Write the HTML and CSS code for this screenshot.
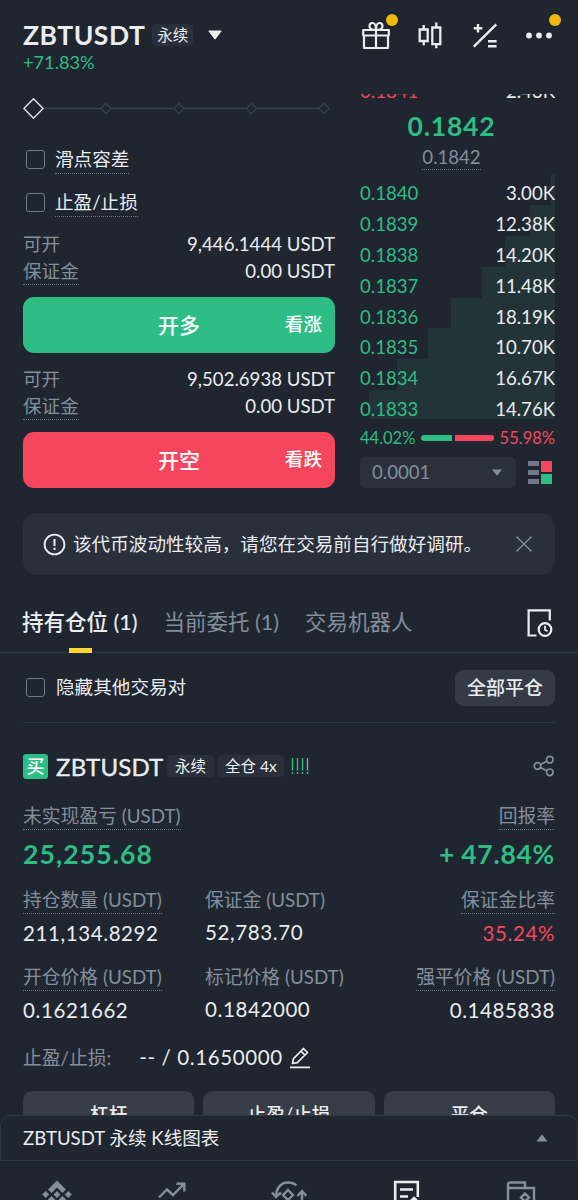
FILE: index.html
```html
<!DOCTYPE html>
<html lang="zh-CN">
<head>
    <meta charset="UTF-8">
    <meta name="viewport" content="width=device-width, initial-scale=1.0">
    <title>ZBTUSDT 永续</title>
    <link rel="stylesheet" href="styles.css">
</head>
<body>
    <header class="header">
        <div class="pair">
            <div class="pair-row">
                <h1 class="pair-name">ZBTUSDT</h1>
                <span class="tag">永续</span>
                <svg class="caret" width="14" height="10" viewBox="0 0 14 10"><path d="M1.2 0.5h11.6a.7.7 0 0 1 .5 1.1L7.7 8.9a.9.9 0 0 1-1.4 0L.7 1.6A.7.7 0 0 1 1.2.5z" fill="#eaecef"/></svg>
            </div>
            <div class="change">+71.83%</div>
        </div>
        <div class="header-icons">
            <span class="icon">
                <svg width="30" height="30" viewBox="0 0 30 30" fill="none" stroke="#eaecef" stroke-width="2.2" stroke-linejoin="round">
                    <path d="M2.2 10h25.6v5.5H2.2zM3 15.5h24v12.500H3zM15 10v18"/>
                    <path d="M15 10c-4 0-6.500-1-6.500-3.800C8.500 4 10 3 11.500 3c2.300 0 3.500 2 3.500 7zM15 10c4 0 6.500-1 6.500-3.800C21.500 4 20 3 18.500 3c-2.300 0-3.500 2-3.500 7z"/>
                </svg>
                <i class="dot"></i>
            </span>
            <span class="icon">
                <svg width="30" height="30" viewBox="0 0 30 30" fill="none" stroke="#eaecef" stroke-width="2.3">
                    <path d="M4.700 9.500h8v11.500h-8zM8.700 5v4.500M8.700 21v4.200M17.300 7.500h8v16.700h-8zM21.300 2.500v5M21.300 24.200v4"/>
                </svg>
            </span>
            <span class="icon">
                <svg width="30" height="30" viewBox="0 0 30 30" fill="none" stroke="#eaecef" stroke-width="2.4">
                    <path d="M26.300 4.300 3.800 26.700M8 4v8.600M3.700 8.300h8.600M18 21.300h8.600M18 26.300h8.600"/>
                </svg>
            </span>
            <span class="icon">
                <svg width="30" height="30" viewBox="0 0 30 30" fill="#eaecef"><circle cx="5" cy="15.500" r="2.900"/><circle cx="15" cy="15.500" r="2.900"/><circle cx="25" cy="15.500" r="2.900"/></svg>
                <i class="dot"></i>
            </span>
        </div>
    </header>

    <main class="content">
        <section class="trade">
            <div class="order-form">
                <div class="slider">
                    <svg width="312" height="28" viewBox="0 0 312 28" fill="none" stroke="#37404d" stroke-width="1.400">
                        <path d="M20 14.500h58M88 14.500h63M161 14.500h62.500M233.500 14.500h62.500"/>
                        <path d="M83 9.500l5 5-5 5-5-5zM156 9.500l5 5-5 5-5-5zM228.500 9.500l5 5-5 5-5-5zM301 9.500l5 5-5 5-5-5z"/>
                        <path d="M10.500 4.800l9.600 9.700-9.600 9.700-9.600-9.700z" stroke="#dfe3e8" stroke-linejoin="round"/>
                    </svg>
                </div>
                <div class="check-row"><i class="checkbox"></i><span class="dotted">滑点容差</span></div>
                <div class="check-row"><i class="checkbox"></i><span class="dotted">止盈/止损</span></div>
                <div class="info">
                    <div class="info-row"><span class="muted">可开</span><span>9,446.1444 USDT</span></div>
                    <div class="info-row"><span class="muted dotted">保证金</span><span>0.00 USDT</span></div>
                </div>
                <div class="order-button buy"><span class="order-main">开多</span><span class="order-side">看涨</span></div>
                <div class="info">
                    <div class="info-row"><span class="muted">可开</span><span>9,502.6938 USDT</span></div>
                    <div class="info-row"><span class="muted dotted">保证金</span><span>0.00 USDT</span></div>
                </div>
                <div class="order-button sell"><span class="order-main">开空</span><span class="order-side">看跌</span></div>
            </div>

            <div class="book">
                <div class="book-ask"><span class="red">0.1841</span><span>2.43K</span></div>
                <div class="last-price">0.1842</div>
                <div class="mark-price"><span class="dotted">0.1842</span></div>
                <div class="bids">
                    <div class="bid"><i class="depth" style="width: 4px"></i><span class="green">0.1840</span><span>3.00K</span></div>
                    <div class="bid"><i class="depth" style="width: 25px"></i><span class="green">0.1839</span><span>12.38K</span></div>
                    <div class="bid"><i class="depth" style="width: 50px"></i><span class="green">0.1838</span><span>14.20K</span></div>
                    <div class="bid"><i class="depth" style="width: 73px"></i><span class="green">0.1837</span><span>11.48K</span></div>
                    <div class="bid"><i class="depth" style="width: 104px"></i><span class="green">0.1836</span><span>18.19K</span></div>
                    <div class="bid"><i class="depth" style="width: 127px"></i><span class="green">0.1835</span><span>10.70K</span></div>
                    <div class="bid"><i class="depth" style="width: 158px"></i><span class="green">0.1834</span><span>16.67K</span></div>
                    <div class="bid"><i class="depth" style="width: 186px"></i><span class="green">0.1833</span><span>14.76K</span></div>
                </div>
                <div class="ratio">
                    <span class="green">44.02%</span>
                    <span class="ratio-bar"><i class="ratio-buy" style="flex-grow: 44.02"></i><i class="ratio-sell" style="flex-grow: 55.98"></i></span>
                    <span class="red">55.98%</span>
                </div>
                <div class="book-tools">
                    <div class="select">
                        <span>0.0001</span>
                        <svg width="10" height="7" viewBox="0 0 10 7"><path d="M0 .5h10L5 6.800z" fill="#848e9c"/></svg>
                    </div>
                    <svg class="book-mode" width="25" height="25" viewBox="0 0 25 25">
                        <path d="M0 1h11v5H0zM0 10h11v5H0zM0 19h11v5H0z" fill="#707889"/>
                        <path d="M13 1h11v11H13z" fill="#f6465d"/>
                        <path d="M13 14h11v10H13z" fill="#2ebd85"/>
                    </svg>
                </div>
            </div>
        </section>

        <section class="notice">
            <svg width="23" height="23" viewBox="0 0 23 23" fill="none" stroke="#eaecef" stroke-width="1.800"><circle cx="11.500" cy="11.500" r="9.900"/><path d="M11.500 6v7M11.500 14.800v2.200" stroke-width="2"/></svg>
            <span class="notice-text">该代币波动性较高，请您在交易前自行做好调研。</span>
            <svg width="18" height="18" viewBox="0 0 18 18" fill="none" stroke="#848e9c" stroke-width="1.400"><path d="M1.500 1.500l15 15M16.500 1.500l-15 15"/></svg>
        </section>

        <nav class="tabs">
            <span class="tab active">持有仓位 (1)</span>
            <span class="tab">当前委托 (1)</span>
            <span class="tab">交易机器人</span>
            <svg class="history" width="27" height="30" viewBox="0 0 27 30" fill="none" stroke="#eaecef" stroke-width="2.200">
                <path d="M10.500 27.500H2.600V2.400h21.200v10"/>
                <circle cx="19" cy="21.500" r="6.300"/>
                <path d="M19 17.800v4l2.600 1.500" stroke-width="1.800"/>
            </svg>
        </nav>

        <section class="filter">
            <i class="checkbox"></i>
            <span class="filter-text">隐藏其他交易对</span>
            <span class="close-all">全部平仓</span>
        </section>

        <section class="position">
            <div class="position-head">
                <span class="side">买</span>
                <span class="position-name">ZBTUSDT</span>
                <span class="tag small">永续</span>
                <span class="tag small">全仓 4x</span>
                <svg class="risk" width="18" height="18" viewBox="0 0 18 18" fill="none" stroke="#2ebd85" stroke-width="1.400">
                    <path d="M1.500 1v12.500M6.500 1v12.500M11.500 1v12.500M1.500 15v2M6.500 15v2M11.500 15v2"/>
                    <path d="M16.500 1v12.500M16.500 15v2" stroke="#76ad9d"/>
                </svg>
                <svg class="share" width="22" height="22" viewBox="0 0 22 22" fill="none" stroke="#848e9c" stroke-width="1.700">
                    <circle cx="4.500" cy="11" r="3.300"/><circle cx="16.800" cy="4.700" r="3.300"/><circle cx="16.800" cy="17.300" r="3.300"/>
                    <path d="M7.500 9.500l6.300-3.200M7.500 12.500l6.300 3.200"/>
                </svg>
            </div>
            <div class="pnl">
                <div class="cell"><span class="label dotted">未实现盈亏 (USDT)</span><span class="pnl-value">25,255.68</span></div>
                <div class="cell right"><span class="label dotted">回报率</span><span class="pnl-value">+ 47.84%</span></div>
            </div>
            <div class="stats">
                <div class="cell"><span class="label dotted">持仓数量 (USDT)</span><span class="value">211,134.8292</span></div>
                <div class="cell"><span class="label">保证金 (USDT)</span><span class="value">52,783.70</span></div>
                <div class="cell right"><span class="label dotted">保证金比率</span><span class="value red">35.24%</span></div>
                <div class="cell"><span class="label dotted">开仓价格 (USDT)</span><span class="value">0.1621662</span></div>
                <div class="cell"><span class="label">标记价格 (USDT)</span><span class="value">0.1842000</span></div>
                <div class="cell right"><span class="label dotted">强平价格 (USDT)</span><span class="value">0.1485838</span></div>
            </div>
            <div class="tpsl">
                <span class="label">止盈/止损:</span>
                <span class="tpsl-value">-- / 0.1650000</span>
                <svg width="22" height="23" viewBox="0 0 22 23" fill="none" stroke="#eaecef" stroke-width="1.700" stroke-linejoin="round">
                    <path d="M3.500 17.500l1-4.800L14.500 2.500l4 4L8.300 16.600zM12 5.200l3.800 3.800M1 21.300h20"/>
                </svg>
            </div>
            <div class="actions">
                <span class="action">杠杆</span>
                <span class="action">止盈/止损</span>
                <span class="action">平仓</span>
            </div>
        </section>
    </main>

    <div class="chart-bar">
        <span>ZBTUSDT 永续 K线图表</span>
        <svg width="12" height="8" viewBox="0 0 12 8"><path d="M6 .3l5.600 7.200H.4z" fill="#848e9c"/></svg>
    </div>

    <footer class="bottom-nav">
        <svg width="32" height="32" viewBox="0 0 32 32" fill="#848e9c">
            <path d="M16 1.500l9 9-3.500 3.500L16 8.500 10.500 14 7 10.500zM16 12l3.500 3.500L16 19l-3.500-3.500zM4.700 12l3.500 3.500L4.700 19l-3.500-3.500zM27.300 12l3.500 3.500-3.500 3.500-3.500-3.500zM16 29.500l-9-9L10.500 17l5.500 5.500 5.500-5.500 3.500 3.500z"/>
        </svg>
        <svg width="32" height="32" viewBox="0 0 32 32" fill="none" stroke="#848e9c" stroke-width="2.400"><path d="M3 18.500l8-8 6 5.500L28 5M20.500 4.700h7.800v7.800M3 28h26"/></svg>
        <svg width="36" height="32" viewBox="0 0 36 32" fill="none" stroke="#848e9c" stroke-width="2.400">
            <path d="M5 18C5 9 10 3.500 17 3.500c4 0 6.500 1 8.500 3M1 13.500l4 4.500 5-4.500M31 29V13M26.500 17l4.500-5 4.500 5M17 11l5 5-5 5-5-5z"/>
        </svg>
        <svg width="32" height="32" viewBox="0 0 32 32" fill="none" stroke="#eaecef" stroke-width="2.600"><path d="M15 29.500H5.200V3h22.600v15M10 10.500h13M10 17.500h8M24 19l5 5-5 5h-5v-5z"/></svg>
        <svg width="32" height="32" viewBox="0 0 32 32" fill="none" stroke="#848e9c" stroke-width="2.400"><path d="M3 9v20h26V9H3V5.500c0-1 .8-2 2-2h15V9M20 14.500l4 4-4 4-4-4z"/></svg>
    </footer>
</body>
</html>
```

FILE: styles.css
```css
* {
    margin: 0;
    padding: 0;
    box-sizing: border-box;
}

body {
    width: 578px;
    height: 1200px;
    display: flex;
    flex-direction: column;
    overflow: hidden;
    background: #1f2630;
    color: #eaecef;
    font-family: 'Lato', 'Noto Sans CJK SC', sans-serif;
    font-size: 18.6px;
    line-height: 27px;
    white-space: nowrap;
}

svg {
    display: block;
    flex-shrink: 0;
}

.green {
    color: #2ebd85;
}

.red {
    color: #f6465d;
}

.muted,
.label {
    color: #848e9c;
}

.label {
    font-size: 18.8px;
}

.dotted {
    border-bottom: 1px dotted #6c7584;
}

/* header */
.header {
    height: 94px;
    flex-shrink: 0;
    display: flex;
    justify-content: space-between;
    padding: 20px 24px 0 23px;
}

.pair-row {
    display: flex;
    align-items: center;
    height: 30px;
}

.pair-name {
    font-size: 26.5px;
    font-weight: 700;
    letter-spacing: 0.5px;
}

.tag {
    background: #29303b;
    border-radius: 4px;
    font-size: 15.5px;
    line-height: 22px;
    padding: 0 5px;
}

.pair-name + .tag {
    margin-left: 7px;
}

.caret {
    margin-left: 15px;
}

.change {
    color: #2ebd85;
    font-size: 18.2px;
    line-height: 25px;
}

.header-icons {
    display: flex;
    gap: 24.5px;
    height: 30px;
}

.icon {
    position: relative;
}

.dot {
    position: absolute;
    top: -6px;
    right: -7px;
    width: 12px;
    height: 12px;
    border-radius: 50%;
    background: #f0b90b;
}

/* scrolled page */
.content {
    flex: 1;
    min-height: 0;
    overflow: hidden;
}

.trade {
    display: flex;
    gap: 25px;
    padding: 0 23px;
    height: 394px;
}

.order-form {
    width: 312px;
}

.slider {
    height: 43.5px;
}

.check-row {
    display: flex;
    align-items: center;
    gap: 10px;
    height: 43px;
    padding-left: 3px;
}

.check-row .dotted {
    margin-top: 2px;
}

.checkbox {
    width: 19px;
    height: 19px;
    border: 1.5px solid #727b89;
    border-radius: 3px;
}

.info {
    margin-top: 7px;
}

.info-row {
    display: flex;
    justify-content: space-between;
    height: 27px;
}

.order-button {
    display: grid;
    grid-template-columns: 1fr auto 1fr;
    align-items: center;
    height: 55.5px;
    margin: 12.5px 0 13px;
    padding: 0 13px 1px 0;
    border-radius: 11px;
    color: #fff;
}

.order-main {
    grid-column: 2;
    font-size: 21px;
    font-weight: 500;
    padding-left: 13px;
}

.order-side {
    justify-self: end;
    font-weight: 500;
}

.buy {
    background: #2ebd85;
}

.sell {
    background: #f6465d;
}

/* order book */
.book {
    width: 195px;
}

.book-ask {
    display: flex;
    justify-content: space-between;
    margin-top: -16px;
    height: 29px;
}

.last-price {
    height: 38px;
    line-height: 38px;
    text-align: center;
    color: #2ebd85;
    font-size: 26.5px;
    font-weight: 700;
    letter-spacing: 0.8px;
    padding-right: 12px;
}

.mark-price {
    display: flex;
    justify-content: center;
    height: 29px;
    line-height: 24px;
    color: #848e9c;
    padding-right: 12px;
}

.mark-price .dotted {
    height: 25px;
}

.bid {
    position: relative;
    display: flex;
    justify-content: space-between;
    align-items: center;
    height: 30.9px;
    padding-top: 8px;
}

.bid span {
    position: relative;
}

.depth {
    position: absolute;
    top: 0;
    right: 0;
    bottom: 0;
    background: #233438;
}

.bid:last-child .depth {
    bottom: 2px;
}

.ratio {
    display: flex;
    align-items: center;
    gap: 6px;
    height: 32px;
    margin-top: 1px;
    font-size: 16.5px;
}

.ratio-bar {
    flex: 1;
    display: flex;
    gap: 3px;
}

.ratio-bar i {
    flex-basis: 0;
    height: 6px;
}

.ratio-buy {
    background: #2ebd85;
    border-radius: 3px 0 0 3px;
}

.ratio-sell {
    background: #f6465d;
    border-radius: 0 3px 3px 0;
}

.book-tools {
    display: flex;
    align-items: center;
    gap: 12px;
    margin-top: 3px;
}

.select {
    display: flex;
    align-items: center;
    justify-content: space-between;
    width: 156px;
    height: 31px;
    padding: 0 14px 0 12px;
    border-radius: 5px;
    background: #2a313d;
    color: #848e9c;
}

/* warning */
.notice {
    display: flex;
    align-items: center;
    height: 62px;
    margin: 25px 23px 0;
    padding: 0 22px 0 20px;
    border-radius: 14px;
    background: #29303b;
}

.notice-text {
    flex: 1;
    margin-left: 7px;
}

.tabs {
    display: flex;
    align-items: center;
    gap: 26px;
    height: 78px;
    padding: 0 25px 0 22px;
    border-bottom: 1px solid #2f3743;
    font-size: 21.5px;
    color: #848e9c;
}

.tab {
    height: 78px;
    line-height: 94px;
}

.active {
    position: relative;
    color: #eaecef;
    font-weight: 500;
}

.active::after {
    content: '';
    position: absolute;
    left: 47px;
    bottom: 0;
    width: 23px;
    height: 5px;
    background: #fcd535;
}

.history {
    margin: 18px 0 0 auto;
}

.filter {
    display: flex;
    align-items: center;
    height: 70px;
    margin: 0 23px;
    padding-left: 3px;
    border-bottom: 1px solid #2f3743;
}

.filter-text {
    flex: 1;
    margin-left: 11px;
}

.close-all {
    height: 36px;
    padding: 0 12px;
    border-radius: 8px;
    background: #343b46;
    font-size: 19px;
    line-height: 36px;
    font-weight: 500;
}

/* position card */
.position {
    padding: 29px 23px 0;
}

.position-head {
    display: flex;
    align-items: center;
    height: 28px;
}

.side {
    width: 25px;
    height: 25px;
    border-radius: 3px;
    background: #2ebd85;
    color: #fff;
    font-size: 18px;
    font-weight: 500;
    line-height: 24px;
    text-align: center;
}

.position-name {
    margin: 0 4px 0 8px;
    font-size: 24px;
    letter-spacing: 0.2px;
    -webkit-text-stroke: 0.4px #eaecef;
}

.tag.small {
    padding: 0 7.5px;
    margin-right: 4px;
}

.risk {
    margin-left: 3px;
}

.share {
    margin-left: auto;
}

.cell {
    display: flex;
    flex-direction: column;
    align-items: flex-start;
}

.right {
    align-items: flex-end;
}

.pnl {
    display: flex;
    justify-content: space-between;
    margin-top: 22px;
}

.pnl-value {
    height: 56px;
    line-height: 48px;
    color: #2ebd85;
    font-size: 26.5px;
    font-weight: 700;
    letter-spacing: 1.1px;
}

.right .pnl-value {
    letter-spacing: 0.7px;
    word-spacing: -1px;
}

.stats {
    display: grid;
    grid-template-columns: 182px 170px 1fr;
}

.value {
    height: 49px;
    line-height: 38px;
    font-size: 20.5px;
    letter-spacing: 0.6px;
}

.tpsl {
    display: flex;
    align-items: center;
    height: 30px;
    margin-top: 2px;
}

.tpsl-value {
    margin: 0 6px 0 28px;
    font-size: 20.5px;
    letter-spacing: 0.6px;
}

.actions {
    display: grid;
    grid-template-columns: repeat(3, 1fr);
    gap: 9px;
    margin-top: 19px;
}

.action {
    height: 46px;
    border-radius: 9px;
    background: #363d47;
    line-height: 46px;
    text-align: center;
    font-weight: 500;
}

/* bottom */
.chart-bar {
    display: flex;
    align-items: center;
    justify-content: space-between;
    height: 46px;
    flex-shrink: 0;
    padding: 0 29px 0 22px;
    border: 1px solid #2f3743;
    border-radius: 10px 10px 0 0;
}

.bottom-nav {
    display: flex;
    justify-content: space-around;
    height: 39px;
    flex-shrink: 0;
    padding-top: 18px;
    overflow: hidden;
}
```
